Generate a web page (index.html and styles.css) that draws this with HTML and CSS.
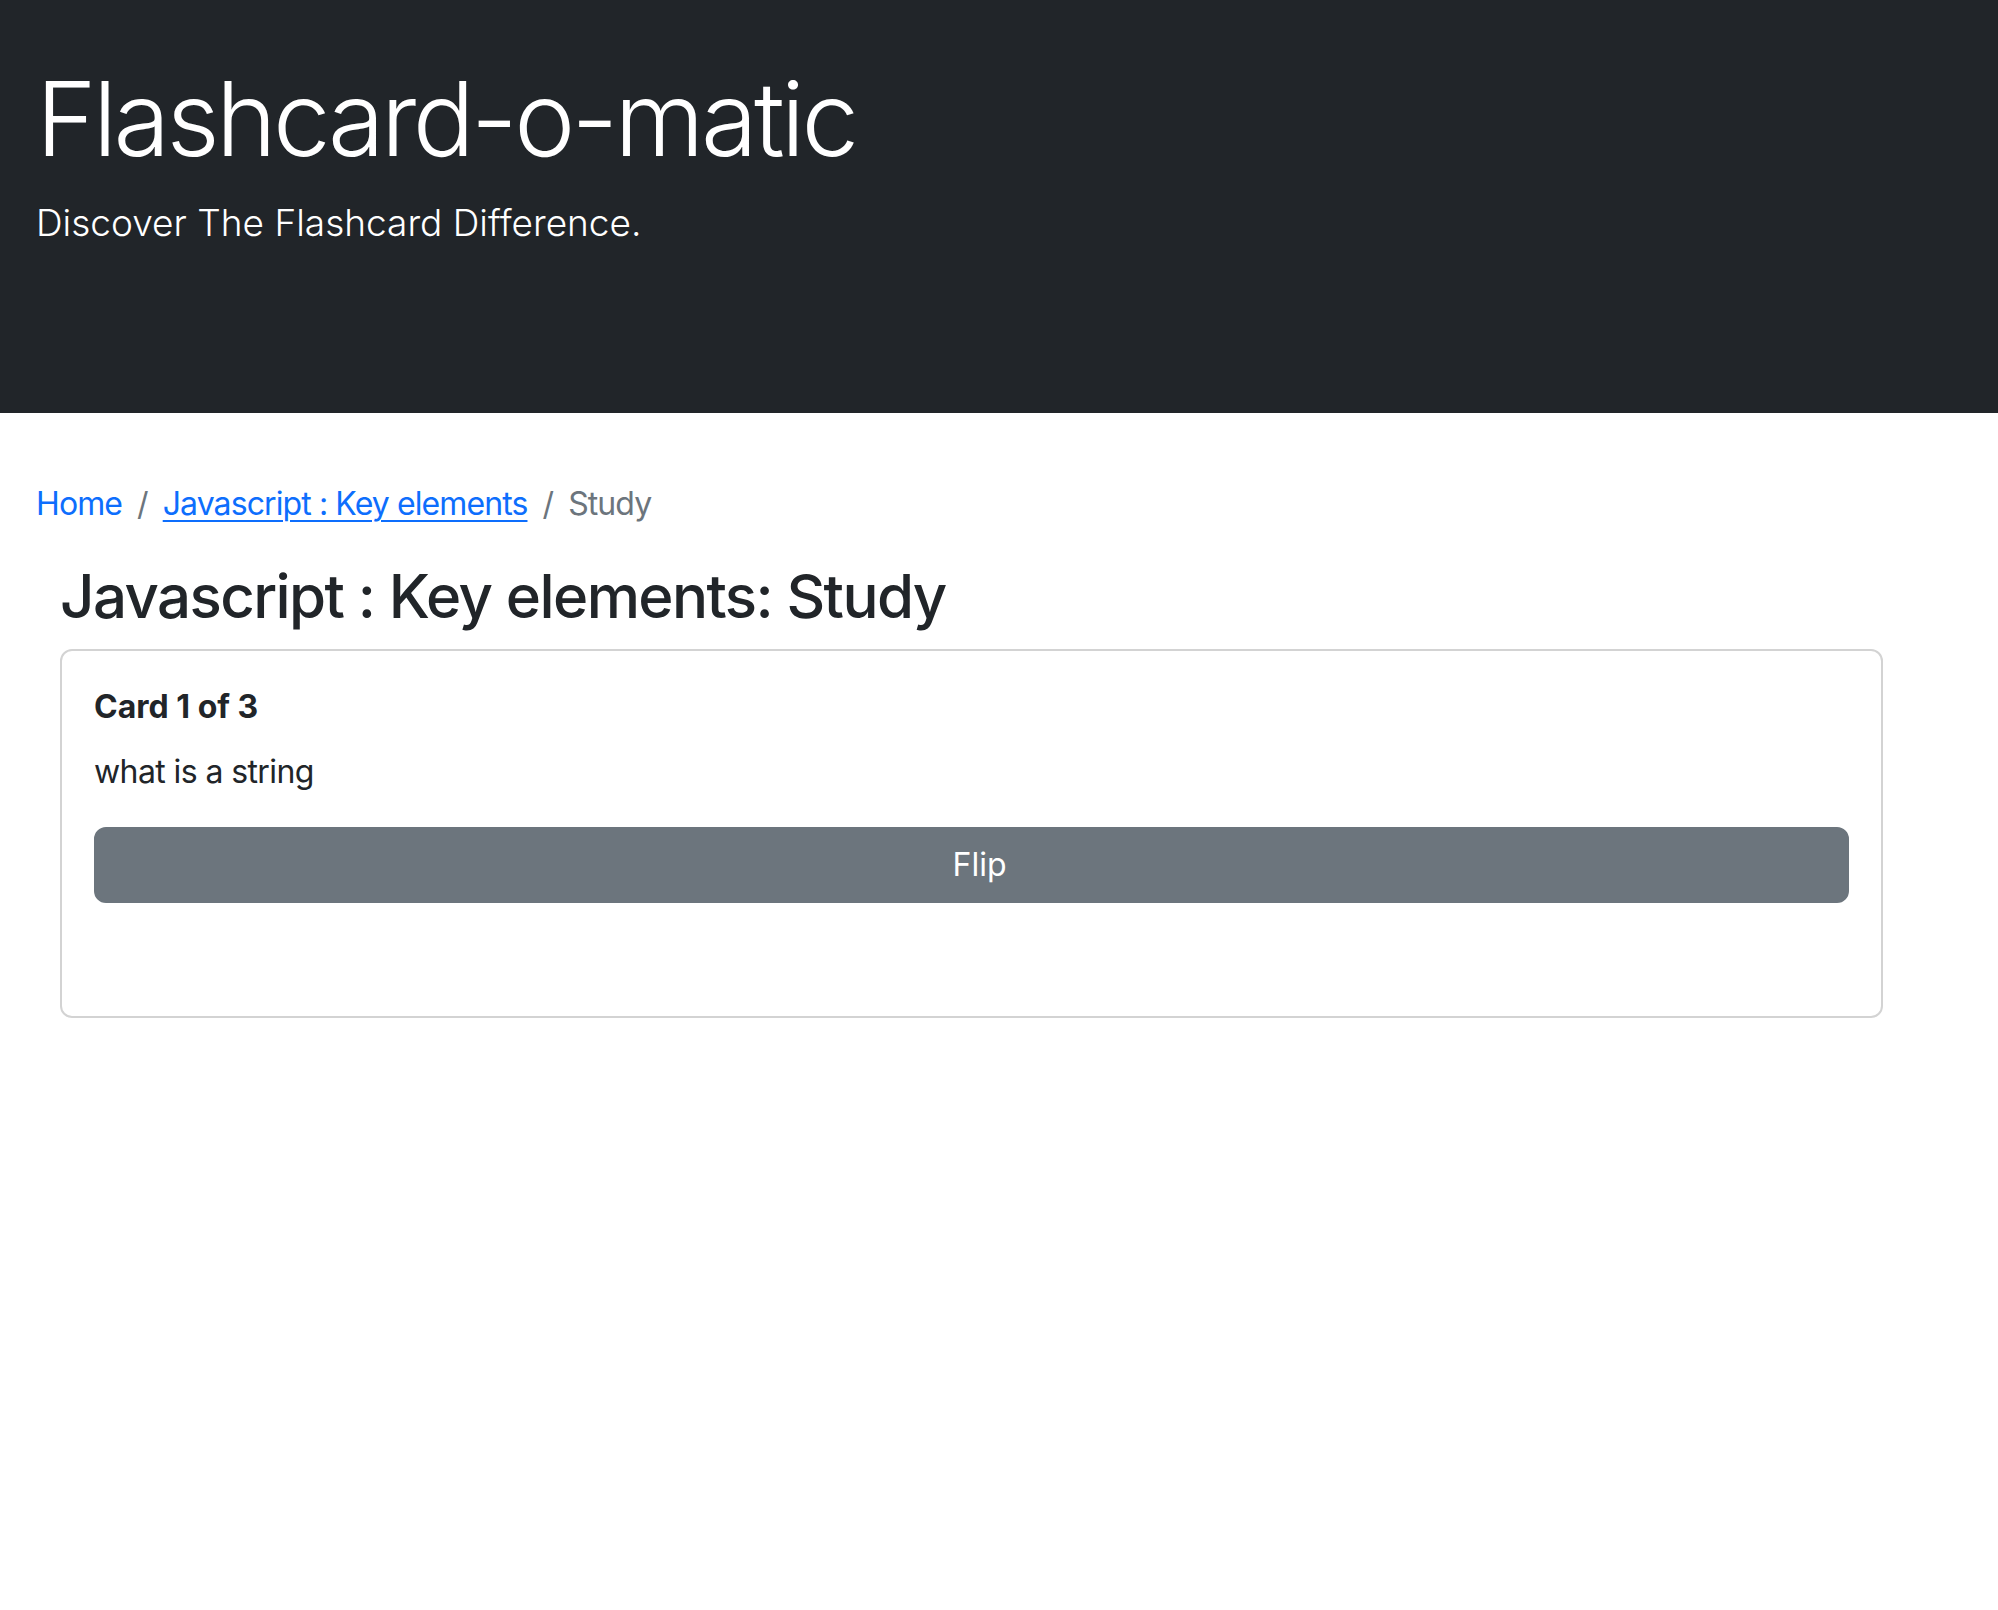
FILE: index.html
```html
<!DOCTYPE html>
<html lang="en">
<head>
<meta charset="utf-8">
<title>Flashcard-o-matic</title>
<link rel="stylesheet" href="styles.css">
</head>
<body>
<header class="hero">
  <h1 class="hero-title">Flashcard-o-matic</h1>
  <p class="hero-lead">Discover The Flashcard Difference.</p>
</header>
<main class="page">
  <nav class="crumbs">
    <a class="crumb-link" href="#">Home</a>
    <span class="crumb-sep">/</span>
    <a class="crumb-link crumb-deck" href="#">Javascript : Key elements</a>
    <span class="crumb-sep">/</span>
    <span class="crumb-current">Study</span>
  </nav>
  <section class="study">
    <h2 class="study-title">Javascript : Key elements: Study</h2>
    <div class="card">
      <div class="card-body">
        <div class="card-count">Card 1 of 3</div>
        <p class="card-text">what is a string</p>
        <button class="btn-flip" type="button">Flip</button>
      </div>
    </div>
  </section>
</main>
</body>
</html>
```

FILE: styles.css
```css
* { box-sizing: border-box; }
html, body { margin: 0; padding: 0; }
body {
  font-family: "Inter", "Liberation Sans", sans-serif;
  font-size: 32px;
  line-height: 1.5;
  color: #212529;
  background: #fff;
}
.hero {
  background: #212529;
  color: #fff;
  height: 413px;
  padding: 57px 36px 0;
}
.hero-title {
  margin: 0;
  font-size: 103px;
  font-weight: 300;
  line-height: 1.2;
  letter-spacing: -3.6px;
}
.hero-lead {
  margin: 14px 0 0;
  font-size: 37px;
  font-weight: 300;
  line-height: 1.5;
}
.page {
  padding: 67px 36px 0;
}
.crumbs {
  display: flex;
  align-items: baseline;
  height: 48px;
  line-height: 48px;
  font-size: 32px;
  letter-spacing: -0.9px;
}
.crumb-link {
  color: #0d6efd;
  text-decoration: none;
}
.crumb-deck {
  text-decoration: underline;
  text-decoration-thickness: 2px;
  text-underline-offset: 5px;
}
.crumb-sep {
  color: #6c757d;
  padding: 0 15px;
}
.crumb-current { color: #6c757d; }
.study {
  padding: 32px 0 0 24px;
}
.study-title {
  margin: 0 0 17px;
  font-size: 60px;
  font-weight: 500;
  line-height: 1.2;
  letter-spacing: -1.6px;
}
.card {
  width: 1823px;
  border: 2px solid #d3d3d3;
  border-radius: 12px;
  background: #fff;
}
.card-body {
  padding: 32px 32px 113px;
}
.card-count {
  font-weight: 700;
  line-height: 48px;
  margin-bottom: 17px;
}
.card-text {
  margin: 0 0 31px;
  line-height: 48px;
  letter-spacing: -0.6px;
}
.btn-flip {
  display: block;
  width: 100%;
  height: 76px;
  padding: 12px 24px 12px 40px;
  font-family: inherit;
  font-size: 32px;
  line-height: 48px;
  color: #fff;
  background: #6c757d;
  border: 2px solid #6c757d;
  border-radius: 12px;
  cursor: pointer;
}
```
